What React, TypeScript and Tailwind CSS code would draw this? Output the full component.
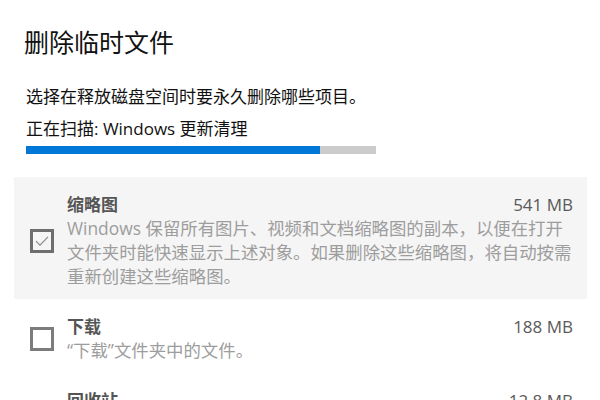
import React from "react";

const FONT = { fontFamily: "'Open Sans', 'Noto Sans CJK SC', sans-serif" };

function CheckBox({ checked }: { checked: boolean }) {
  return (
    <div
      className={
        "w-[24px] h-[24px] shrink-0 border-[3px] flex items-center justify-center " +
        (checked ? "border-[#6e6e6e]" : "border-[#7c7c7c]")
      }
    >
      {checked && (
        <svg width="18" height="18" viewBox="0 0 18 18" fill="none">
          <path d="M3 9.2 L7 13.2 L15 4.8" stroke="#8a8a8a" strokeWidth="1.2" />
        </svg>
      )}
    </div>
  );
}

function Item({
  title,
  size,
  desc,
  checked,
  shaded,
}: {
  title: string;
  size: string;
  desc: string[];
  checked: boolean;
  shaded?: boolean;
}) {
  return (
    <div
      className={
        "flex items-center pl-[16px] pr-[14px] pt-[17px] pb-[11px] " +
        (shaded ? "bg-[#f5f5f5]" : "bg-white")
      }
    >
      <CheckBox checked={checked} />
      <div className="flex-1 ml-[13px]">
        <div className="flex justify-between text-[17px] leading-[22px]">
          <span className="font-bold text-[#555555]">{title}</span>
          <span className="text-[#5a5a5a]">{size}</span>
        </div>
        <div className="text-[17.4px] leading-[24px] text-[#9d9d9d] whitespace-nowrap">
          {desc.map((d, i) => (
            <div key={i}>{d}</div>
          ))}
        </div>
      </div>
    </div>
  );
}

export default function App() {
  return (
    <div className="w-[600px] h-[400px] bg-white overflow-hidden" style={FONT}>
      <div className="pl-[24px] pt-[25px] text-[25px] leading-[34px] text-[#111111]">
        删除临时文件
      </div>
      <div className="pl-[26px] mt-[26px] text-[17px] leading-[24px] text-[#111111]">
        选择在释放磁盘空间时要永久删除哪些项目。
      </div>
      <div className="pl-[26px] mt-[8px] text-[17px] leading-[24px] text-[#111111]">
        正在扫描: Windows 更新清理
      </div>
      <div className="ml-[26px] mt-[5px] w-[350px] h-[8px] bg-[#cccccc] flex">
        <div className="w-[294px] h-full bg-[#0078d7]" />
      </div>
      <div className="mt-[23px] ml-[14px] w-[573px]">
        <Item
          shaded
          checked
          title="缩略图"
          size="541 MB"
          desc={[
            "Windows 保留所有图片、视频和文档缩略图的副本，以便在打开",
            "文件夹时能快速显示上述对象。如果删除这些缩略图，将自动按需",
            "重新创建这些缩略图。",
          ]}
        />
        <Item
          checked={false}
          title="下载"
          size="188 MB"
          desc={["“下载”文件夹中的文件。"]}
        />
        <Item
          checked={false}
          title="回收站"
          size="12.8 MB"
          desc={["回收站中的文件。"]}
        />
      </div>
    </div>
  );
}
